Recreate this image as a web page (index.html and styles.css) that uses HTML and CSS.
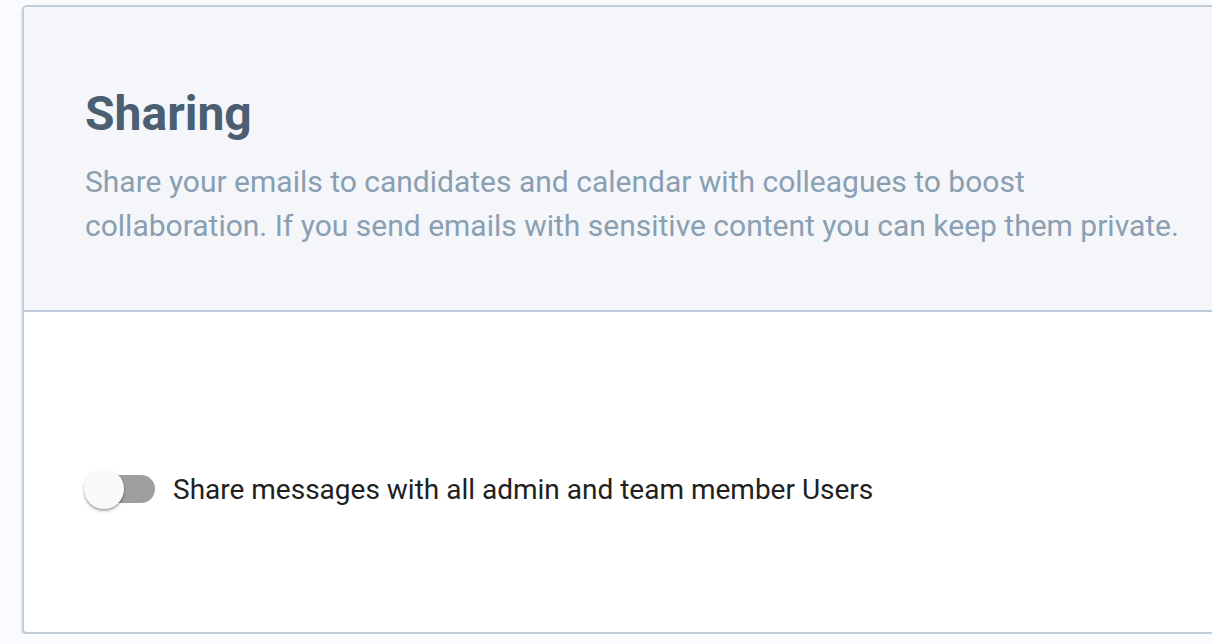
FILE: index.html
```html
<!DOCTYPE html>
<html>
<head>
<meta charset="utf-8">
<link rel="stylesheet" href="styles.css">
</head>
<body>
<div class="page">
  <section class="card">
    <header class="card-head">
      <h1 class="title">Sharing</h1>
      <p class="desc">Share your emails to candidates and calendar with colleagues to boost collaboration. If you send emails with sensitive content you can keep them private.</p>
    </header>
    <div class="card-body">
      <label class="toggle-row">
        <span class="switch"><span class="track"></span><span class="knob"></span></span>
        <span class="toggle-label">Share messages with all admin and team member Users</span>
      </label>
    </div>
  </section>
</div>
</body>
</html>
```

FILE: styles.css
```css
html, body {
  margin: 0;
  padding: 0;
  overflow: hidden;
  background: #f9fbfe;
  font-family: Roboto, "Liberation Sans", sans-serif;
}
.page {
  padding: 5px 0 0 22px;
  width: 1240px;
}
.card {
  width: 1220px;
  border: 2px solid #c1ceda;
  border-radius: 5px;
  background: #fff;
  box-shadow: 0 2px 3px rgba(120, 140, 165, 0.35);
  overflow: hidden;
}
.card-head {
  background: #f4f6f9;
  border-bottom: 2px solid #bccada;
  padding: 79px 40px 0 61px;
  box-sizing: border-box;
  height: 305px;
}
.title {
  margin: 0;
  font-size: 48px;
  font-weight: 700;
  color: #4b5e72;
  line-height: 56px;
}
.desc {
  margin: 18px 0 0;
  font-size: 30px;
  line-height: 44px;
  color: #8a9fb2;
  width: 1115px;
}
.card-body {
  height: 320px;
  padding: 0 0 0 61px;
  display: flex;
  align-items: center;
}
.toggle-row {
  display: flex;
  align-items: center;
  gap: 17px;
  margin-top: 34px;
}
.switch {
  position: relative;
  width: 71px;
  height: 40px;
  display: inline-block;
}
.track {
  position: absolute;
  left: 1px;
  top: 6px;
  width: 69px;
  height: 28px;
  border-radius: 14px;
  background: #9e9e9e;
}
.knob {
  position: absolute;
  left: -1px;
  top: 0;
  width: 40px;
  height: 40px;
  border-radius: 50%;
  background: #fafafa;
  box-shadow: 0 2px 3px rgba(0,0,0,0.3), 0 1px 1px rgba(0,0,0,0.14);
}
.toggle-label {
  font-size: 28px;
  color: #212121;
}
```
